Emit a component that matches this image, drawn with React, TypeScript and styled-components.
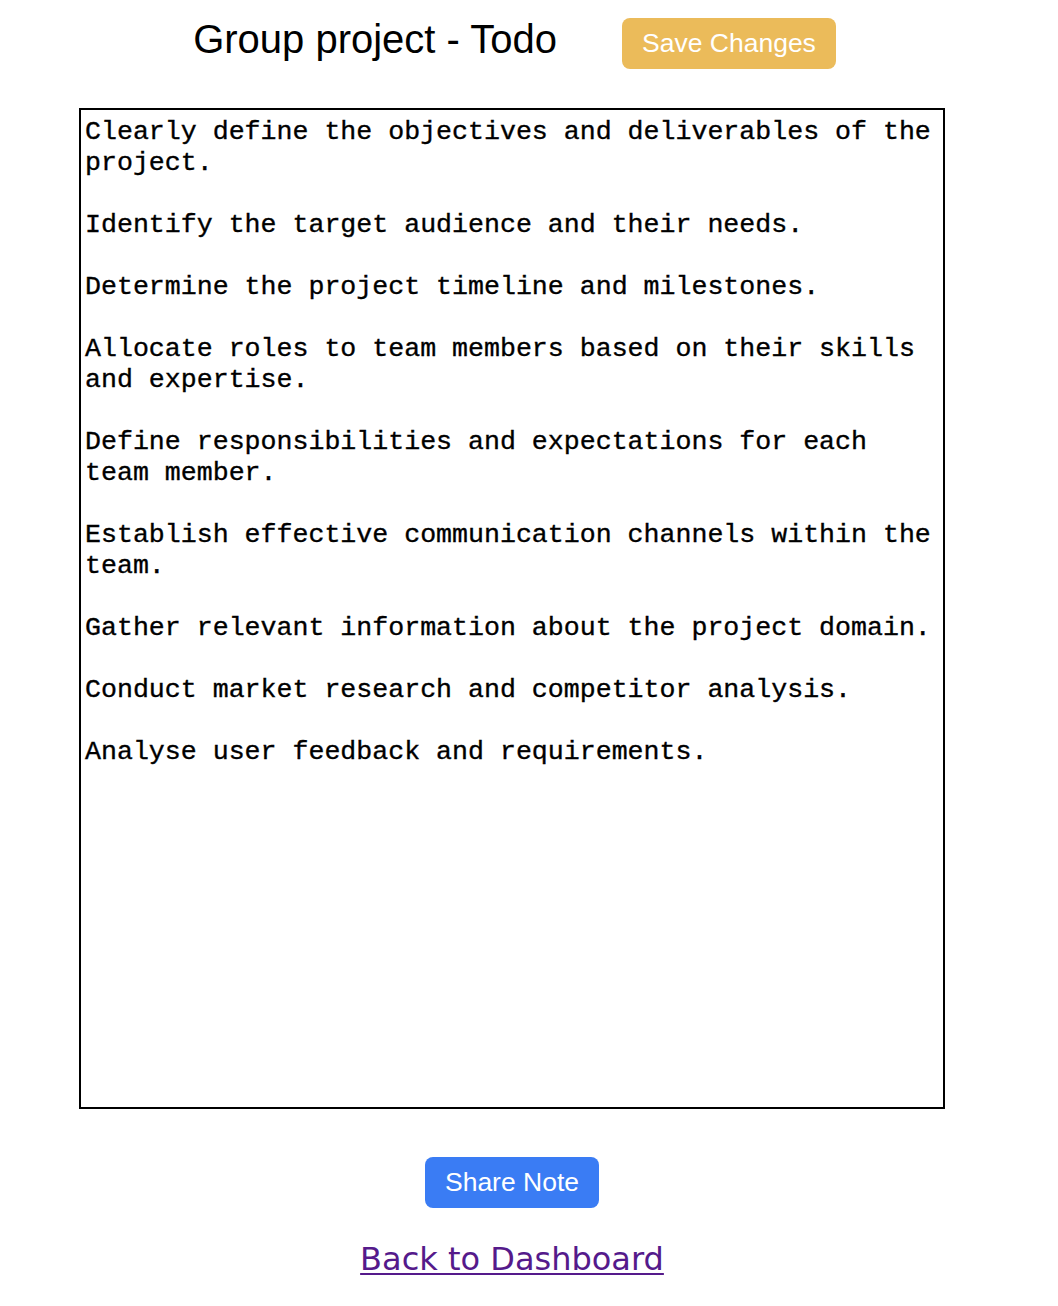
import React from "react";
import styled, { createGlobalStyle } from "styled-components";

const GlobalStyle = createGlobalStyle`
  html, body { margin: 0; padding: 0; background: #ffffff; }
  body { font-family: "Liberation Sans", Arial, sans-serif; }
`;

const Page = styled.div`
  width: 1024px;
  display: flex;
  flex-direction: column;
  align-items: center;
  padding-top: 18px;
`;

const Header = styled.div`
  display: flex;
  align-items: flex-start;
  gap: 65px;
  margin-left: 5px;
`;

const Title = styled.h1`
  margin: 1px 0 0;
  font-family: "Liberation Sans", Arial, sans-serif;
  font-weight: 400;
  font-size: 40px;
  line-height: 40px;
  color: #000;
`;

const Button = styled.button<{ $bg: string }>`
  height: 51px;
  padding: 0 20px;
  border: none;
  border-radius: 8px;
  background: ${(p) => p.$bg};
  color: #fff;
  font-family: "Liberation Sans", Arial, sans-serif;
  font-size: 26.5px;
  cursor: pointer;
`;

const NoteArea = styled.textarea`
  box-sizing: border-box;
  margin-top: 39px;
  width: 866px;
  height: 1001px;
  border: 2px solid #000;
  padding: 7px 4px 3px;
  font-family: "Liberation Mono", "Courier New", monospace;
  font-size: 26.6px;
  line-height: 31px;
  color: #000;
  -webkit-text-stroke: 0.35px #000;
  resize: none;
  outline: none;
  overflow: hidden;
`;

const ShareWrap = styled.div`
  margin-top: 48px;
`;

const BackLink = styled.a`
  margin-top: 32px;
  font-family: "DejaVu Sans", sans-serif;
  font-size: 32px;
  color: #551a8b;
  text-decoration: underline;
  text-decoration-thickness: 2px;
  text-underline-offset: 3px;
`;

const noteText = `Clearly define the objectives and deliverables of the project.

Identify the target audience and their needs.

Determine the project timeline and milestones.

Allocate roles to team members based on their skills and expertise.

Define responsibilities and expectations for each team member.

Establish effective communication channels within the team.

Gather relevant information about the project domain.

Conduct market research and competitor analysis.

Analyse user feedback and requirements.`;

export default function App() {
  return (
    <>
      <GlobalStyle />
      <Page>
        <Header>
          <Title>Group project - Todo</Title>
          <Button $bg="#ebbb5a">Save Changes</Button>
        </Header>
        <NoteArea defaultValue={noteText} spellCheck={false} />
        <ShareWrap>
          <Button $bg="#3a7cf4">Share Note</Button>
        </ShareWrap>
        <BackLink href="#">Back to Dashboard</BackLink>
      </Page>
    </>
  );
}
